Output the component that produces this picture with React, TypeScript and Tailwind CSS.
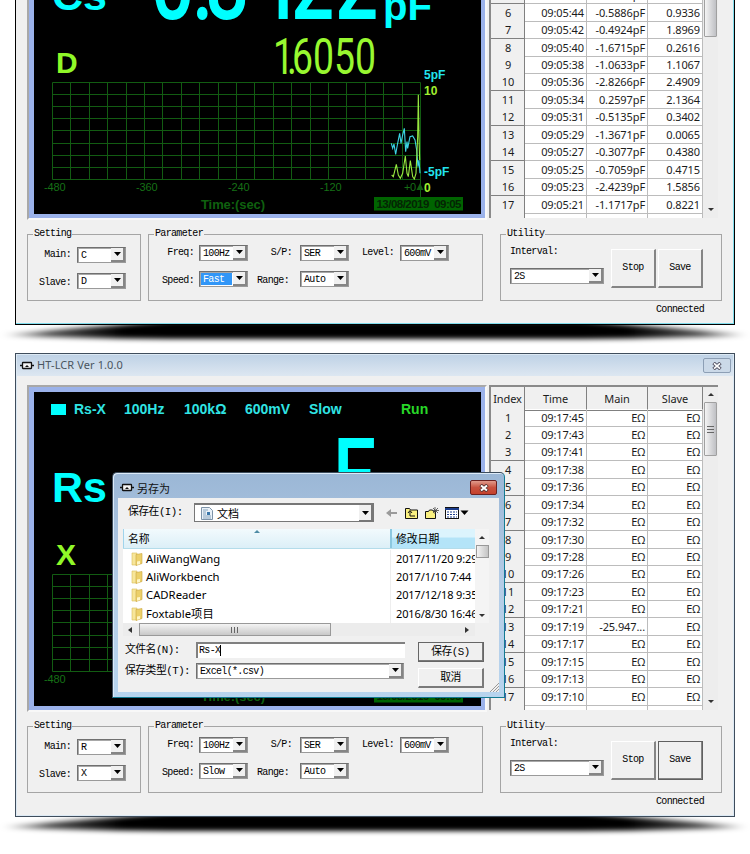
import type { ReactNode } from 'react';

type Row = [string, string, string];

interface Digits {
  text: string;
  xs: number[];
}

interface Meter {
  label: string;
  subLabel: string;
  status: string[];
  main: Digits;
  unit: string;
  sub: Digits | null;
  hasTrace: boolean;
}

interface Params {
  main: string;
  slave: string;
  speed: string;
}

const capacitanceRows: Row[] = [
  ['09:05:55', '-0.3122pF', '1.6050'],
  ['09:05:53', '-0.9214pF', '0.7731'],
  ['09:05:51', '-1.2049pF', '1.0482'],
  ['09:05:49', '-0.6673pF', '0.5127'],
  ['09:05:46', '-0.8120pF', '0.8210'],
  ['09:05:44', '-0.5886pF', '0.9336'],
  ['09:05:42', '-0.4924pF', '1.8969'],
  ['09:05:40', '-1.6715pF', '0.2616'],
  ['09:05:38', '-1.0633pF', '1.1067'],
  ['09:05:36', '-2.8266pF', '2.4909'],
  ['09:05:34', '0.2597pF', '2.1364'],
  ['09:05:31', '-0.5135pF', '0.3402'],
  ['09:05:29', '-1.3671pF', '0.0065'],
  ['09:05:27', '-0.3077pF', '0.4380'],
  ['09:05:25', '-0.7059pF', '0.4715'],
  ['09:05:23', '-2.4239pF', '1.5856'],
  ['09:05:21', '-1.1717pF', '0.8221'],
];

const resistanceRows: Row[] = [
  '45', '43', '41', '38', '36', '34', '32', '30', '28', '26', '23', '21', '19', '17', '15', '13', '10',
].map((s) => [`09:17:${s}`, s === '19' ? '-25.947...' : 'EΩ', 'EΩ']);

const capacitance: Meter = {
  label: 'Cs',
  subLabel: 'D',
  status: ['Cs-D', '100Hz', '100kΩ', '600mV', 'Fast'],
  main: { text: '0.3122', xs: [-4, 37, 51, 104, 136, 180] },
  unit: 'pF',
  sub: { text: '1.6050', xs: [-3, 11, 16, 37, 58, 79] },
  hasTrace: true,
};

const resistance: Meter = {
  label: 'Rs',
  subLabel: 'X',
  status: ['Rs-X', '100Hz', '100kΩ', '600mV', 'Slow'],
  main: { text: 'E', xs: [178] },
  unit: '',
  sub: null,
  hasTrace: false,
};

const folders = [
  ['AliWangWang', '2017/11/20 9:29'],
  ['AliWorkbench', '2017/1/10 7:44'],
  ['CADReader', '2017/12/18 9:35'],
  ['Foxtable项目', '2016/8/30 16:46'],
];

const mono = "font-['Liberation_Mono','Noto_Sans_CJK_SC',monospace] text-[10px] leading-[12px] tracking-[-0.67px]";
const sans = "font-['Noto_Sans','Noto_Sans_CJK_SC',sans-serif]";

function AppIcon() {
  return (
    <svg width="14" height="10" viewBox="0 0 14 10" fill="none" stroke="#111">
      <rect x="2.5" y="1.5" width="9" height="6" rx=".5" fill="#f5f5f5" strokeWidth="1.3" />
      <path d="M0 4.5h2M12 4.5h2" strokeWidth="1.4" />
      <path d="M5 6l2-2 2 2z" fill="#111" stroke="none" />
    </svg>
  );
}

function Caret() {
  return (
    <svg width="7" height="4" viewBox="0 0 7 4" className="shrink-0">
      <path d="M0 0h7L3.5 4z" fill="#000" />
    </svg>
  );
}

function Select({ value, className = '', active = false }: { value: string; className?: string; active?: boolean }) {
  return (
    <div
      className={`flex h-4 shrink-0 border border-t-[#707070] border-l-[#707070] border-r-[#9a9a9a] border-b-[#9a9a9a] bg-white shadow-[inset_1px_1px_0_#a8a8a8] ${mono} ${className}`}
    >
      <div className={`m-px min-w-0 flex-1 overflow-hidden pt-px pl-[2px] whitespace-nowrap ${active ? 'bg-[#3196f7] text-white' : 'text-black'}`}>
        {value}
      </div>
      <div className="flex w-[14px] shrink-0 items-center justify-center border-r-2 border-b-2 border-[#858585] bg-[#f0f0f0]">
        <Caret />
      </div>
    </div>
  );
}

function Group({ title, className, children }: { title: string; className: string; children: ReactNode }) {
  return (
    <fieldset className={`h-[73px] shrink-0 border border-[#a5a5a5] ${className}`}>
      <legend className="ml-[5px] px-[1px]">{title}</legend>
      {children}
    </fieldset>
  );
}

function Readout({ digits, width, height, color, bold = false, className }: {
  digits: Digits | null;
  width: number;
  height: number;
  color: string;
  bold?: boolean;
  className: string;
}) {
  // digits are squeezed sideways, so the offsets are stretched back by the same factor
  const squeeze = bold ? 0.745 : 0.76;
  return (
    <svg width={width} height={height} className={`shrink-0 overflow-visible font-[Roboto,sans-serif] ${className}`}>
      {digits && (
        <text
          transform={`scale(${squeeze} 1)`}
          x={digits.xs.map((x) => x / squeeze).join(' ')}
          y={height}
          fontSize={height / 0.711}
          fontWeight={bold ? 500 : 400}
          fill={color}
        >
          {digits.text}
        </text>
      )}
    </svg>
  );
}

function Chart({ hasTrace }: { hasTrace: boolean }) {
  const left = 18.5;
  const right = 386.5;
  const top = 2.5;
  const bottom = 99.5;
  const cols = Array.from({ length: 21 }, (_, i) => Math.floor(left + i * 18.4) + 0.5);
  const rows = Array.from({ length: 9 }, (_, i) => Math.floor(top + i * 12.1) + 0.5);

  return (
    <svg width="447" height="134" className="block overflow-visible font-['Liberation_Sans',sans-serif]">
      <g stroke="#125c12" strokeWidth="1">
        {cols.map((x) => <path key={x} d={`M${x} ${top}V${bottom}`} />)}
        {rows.map((y) => <path key={y} d={`M${left} ${y}H${right}`} />)}
        <path d="M386.5 99V117" />
      </g>
      <path d="M382.5 110l3.500-7 3.500 7z" fill="#125c12" />
      <g fill="#167016" fontSize="11" fontWeight="400">
        <text x="10" y="111" textLength="21.5">-480</text>
        <text x="102" y="111" textLength="21.5">-360</text>
        <text x="194" y="111" textLength="21.5">-240</text>
        <text x="286" y="111" textLength="21.5">-120</text>
        <text x="370" y="111" textLength="12">+0</text>
        <text x="167" y="129" fontSize="13" fontWeight="700" fill="#0f600f" textLength="64">Time:(sec)</text>
      </g>
      <rect x="340" y="117" width="89" height="13.5" fill="#006400" />
      <text x="342.5" y="128" fontSize="11.5" fontWeight="700" fill="#042404" textLength="85" xmlSpace="preserve">
        {'13/08/2019  09:05'}
      </text>
      {hasTrace && (
        <>
          <g transform="translate(326 -10) scale(.3333)" fill="none" strokeWidth="3.3">
            <path stroke="#3cd4e4" d="M94 220l4 15 4-13 5 31 5-28 4-20 3-15 4 30 5-25 5-20 4 70 4-30 2 20 7-35 8-2 7 12 5 30 4 50 3-20 3 40" />
            <path stroke="#98e840" d="M95 315l5 5 9-37 6 32 6 10 7-15 8-52 5 52 4 10 6-48 7 48 5 7 5-17 5-110 2-126 2 126 2 70" />
          </g>
          <g fontSize="12" fontWeight="700">
            <text x="390" y="-1" fill="#22e4ee">5pF</text>
            <text x="390" y="14.5" fill="#a0f030">10</text>
            <text x="390" y="95.5" fill="#22e4ee">-5pF</text>
            <text x="390" y="111.5" fill="#a0f030">0</text>
          </g>
        </>
      )}
    </svg>
  );
}

function Screen({ meter }: { meter: Meter }) {
  const widths = ['w-[50px]', 'w-[60px]', 'w-[61px]', 'w-[64px]', 'w-[92px]'];
  return (
    <div className="h-[327px] w-[460px] shrink-0 border-2 border-t-[#a8a8a8] border-l-[#a8a8a8] border-r-[#f8f8f8] border-b-[#f8f8f8]">
      <div className="h-full border-t-[5px] border-r-4 border-b-4 border-l-[5px] border-[#9bb2ea]">
        <div className="h-full overflow-hidden bg-black font-['Liberation_Sans',sans-serif] font-bold">
          <div className="flex h-[34px] items-center pl-[17px] text-sm text-[#30e4e4]">
            <span className="mt-px mr-2 h-[11px] w-[15px] bg-[#00ffff]" />
            {meter.status.map((s, i) => (
              <span key={s} className={widths[i]}>{s}</span>
            ))}
            <span className="text-[#28d828]">Run</span>
          </div>
          <div className="flex h-[94px] items-end pl-[18px] text-[#00ffff]">
            <span className="mb-[11px] w-[103px] shrink-0 text-[43px] leading-none">{meter.label}</span>
            <Readout digits={meter.main} width={228} height={73} color="#00ffff" bold className="mb-[9px]" />
            <span className="mb-[2px] text-[40px] leading-none">{meter.unit}</span>
          </div>
          <div className="flex h-[52px] items-end pl-[22px] text-[#90f828]">
            <span className="mb-[2px] w-[220px] shrink-0 text-[30px] leading-none">{meter.subLabel}</span>
            <Readout digits={meter.sub} width={100} height={35} color="#98f830" className="mb-[6px]" />
          </div>
          <Chart hasTrace={meter.hasTrace} />
        </div>
      </div>
    </div>
  );
}

function DataTable({ rows, thumb }: { rows: Row[]; thumb: string }) {
  const head = 'border-r border-b border-[#808080] text-center';
  return (
    <div className={`flex h-[325px] w-[229px] shrink-0 overflow-hidden border-t-2 border-l-2 border-[#8a8a8a] text-[11px] tracking-[-0.1px] text-[#1c1c1c] ${sans}`}>
      <div className="w-[212px] shrink-0 bg-white">
        <div className="grid h-[21.5px] grid-cols-[34px_62px_61px_55px] bg-[#f0f0f0] leading-[23px]">
          <div className={head}>Index</div>
          <div className={head}>Time</div>
          <div className={head}>Main</div>
          <div className={head}>Slave</div>
        </div>
        {[...rows, ['', '', '']].map((r, i) => (
          <div key={i} className="grid h-[17.44px] grid-cols-[34px_62px_61px_55px] leading-[17px]">
            <div className="border-r border-b border-[#808080] bg-[#f0f0f0] pl-px text-center">{i < rows.length ? i + 1 : ''}</div>
            {r.map((cell, c) => (
              <div key={c} className="border-r border-b border-[#bcbcbc] pr-[2px] text-right">{cell}</div>
            ))}
          </div>
        ))}
      </div>
      <div className="flex flex-1 flex-col items-center bg-[#ededed]">
        <div className="flex h-[15px] items-center">
          <svg width="6" height="3"><path d="M0 3h6L3 0z" fill="#333" /></svg>
        </div>
        <div className={`flex w-[13px] items-center justify-center rounded-[1px] border border-[#a0a0a0] bg-linear-to-r from-[#f4f4f4] to-[#bfc0c4] ${thumb}`}>
          <svg width="7" height="7"><path d="M0 .5h7M0 3.500h7M0 6.500h7" stroke="#666" /></svg>
        </div>
        <div className="mt-auto flex h-[18px] items-center">
          <svg width="6" height="3"><path d="M0 0h6L3 3z" fill="#333" /></svg>
        </div>
      </div>
    </div>
  );
}

function Controls({ params, saveFocused }: { params: Params; saveFocused: boolean }) {
  const button = 'flex h-[39px] w-[45px] items-center justify-center border-t border-l border-t-white border-l-white border-r-2 border-b-2 border-r-[#858585] border-b-[#858585]';
  return (
    <div className={`mt-[8px] flex items-start text-black ${mono}`}>
      <Group title="Setting" className="w-[114px]">
        <div className="flex flex-col gap-[10px] pt-[7px]">
          <div className="flex items-center">
            <span className="w-[43px] text-right">Main:</span>
            <Select value={params.main} className="ml-[6px] w-[49px]" />
          </div>
          <div className="flex items-center">
            <span className="w-[43px] pt-[3px] text-right">Slave:</span>
            <Select value={params.slave} className="ml-[6px] w-[49px]" />
          </div>
        </div>
      </Group>
      <Group title="Parameter" className="ml-[7px] w-[335px]">
        <div className="flex items-center pt-[5px]">
          <span className="w-[45px] text-right">Freq:</span>
          <Select value="100Hz" className="ml-[5px] w-[49px]" />
          <span className="w-[44px] text-right">S/P:</span>
          <Select value="SER" className="ml-[8px] w-[49px]" />
          <span className="w-[45px] text-right">Level:</span>
          <Select value="600mV" className="ml-[6px] w-[49px]" />
        </div>
        <div className="flex items-center pt-[10px]">
          <span className="w-[45px] pt-[3px] text-right">Speed:</span>
          <Select value={params.speed} active={params.speed === 'Fast'} className="ml-[5px] w-[49px]" />
          <span className="w-[41px] pt-[3px] text-right">Range:</span>
          <Select value="Auto" className="ml-[11px] w-[49px]" />
        </div>
      </Group>
      <div className="ml-[17px]">
        <Group title="Utility" className="w-[222px]">
          <div className="flex pt-[6px] pl-[9px]">
            <div className="w-[95px]">
              <div>Interval:</div>
              <Select value="2S" className="mt-[10px] w-[94px]" />
            </div>
            <div className={`mt-[3px] ml-[6px] ${button}`}>Stop</div>
            <div className={`mt-[3px] ml-[2px] ${button} ${saveFocused ? 'outline outline-[#606060] -outline-offset-1' : ''}`}>Save</div>
          </div>
        </Group>
        <div className="mt-[3px] pr-[18px] text-right">Connected</div>
      </div>
    </div>
  );
}

function Shadow() {
  return (
    <svg width="750" height="36" viewBox="0 0 750 36" className="pointer-events-none absolute bottom-0 left-0">
      <defs>
        <filter id="soft" x="-5%" y="-80%" width="110%" height="260%">
          <feGaussianBlur stdDeviation="5 2.4" />
        </filter>
        <linearGradient id="ends" x1="0" x2="1">
          <stop offset="0" stopOpacity="0.25" />
          <stop offset="0.06" stopOpacity="0.7" />
          <stop offset="0.16" stopOpacity="1" />
          <stop offset="0.84" stopOpacity="1" />
          <stop offset="0.94" stopOpacity="0.7" />
          <stop offset="1" stopOpacity="0.25" />
        </linearGradient>
      </defs>
      <path d="M4 18Q60 12 170 4H580Q690 12 746 18Q690 21 580 22H170Q60 21 4 18z" fill="url(#ends)" filter="url(#soft)" />
    </svg>
  );
}

function MeterWindow({ meter, rows, params, thumb, frame, saveFocused = false }: {
  meter: Meter;
  rows: Row[];
  params: Params;
  thumb: string;
  frame: string;
  saveFocused?: boolean;
}) {
  return (
    <div className={`relative mx-auto h-[464px] w-[720px] overflow-hidden border bg-[#f0f0f0] p-px ${frame}`}>
      <div className="flex h-[21px] items-center bg-linear-to-b from-[#bfd2e6] to-[#dde7f1] pr-[2px] pl-[3px]">
        <AppIcon />
        <span className={`ml-[3px] text-[11px] tracking-[0.1px] text-[#4a5560] ${sans}`}>HT-LCR Ver 1.0.0</span>
        <div className="ml-auto flex h-[15px] w-[28px] items-center justify-center rounded-[2px] border border-[#8d9fb5] bg-[#cbd9e8]">
          <svg width="10" height="8" viewBox="0 0 10 8">
            <path d="M1.500 1l7 6M8.500 1l-7 6" stroke="#556" strokeWidth="3.6" />
            <path d="M2 1.400l6 5.200M8 1.400L2 6.600" stroke="#fff" strokeWidth="1.7" />
          </svg>
        </div>
      </div>
      <div className="pt-[9px] pl-[10px]">
        <div className="flex gap-[2px]">
          <Screen meter={meter} />
          <DataTable rows={rows} thumb={thumb} />
        </div>
        <Controls params={params} saveFocused={saveFocused} />
      </div>
    </div>
  );
}

function FolderIcon() {
  return (
    <svg width="12" height="14" viewBox="0 0 12 14">
      <path d="M1 1h5v12H1z" fill="#f7e69a" stroke="#d9bd57" strokeWidth=".6" />
      <path d="M5 2.500l6-1v10L5 13.500z" fill="#ecd06a" stroke="#c9a63f" strokeWidth=".6" />
      <path d="M6 9.500l3-.6v3L6 12.700z" fill="#fff6c8" />
    </svg>
  );
}

function SaveDialog() {
  const button = 'flex h-[20px] w-[66px] items-center justify-center border-t border-l border-t-white border-l-white border-r-2 border-b-2 border-r-[#7a7a7a] border-b-[#7a7a7a] bg-[#f0f0f0]';
  const label = "shrink-0 font-['Liberation_Mono','Noto_Sans_CJK_SC',monospace] text-[10.8px] leading-[14px] tracking-[-0.5px]";
  return (
    <div className="absolute top-[119px] left-[112px] flex h-[226px] w-[393px] flex-col rounded-t-[5px] border border-[#3c4c5c] border-r-[#127a92] border-b-[#127a92] bg-linear-to-b from-[#9bb7d6] via-[#b4cce6] to-[#b7d4ee] px-[5px] pb-[5px] text-black shadow-[inset_1px_1px_0_#dceaf8]">
      <div className="flex h-[25px] shrink-0 items-center pt-[5px] pr-[2px] pl-[2px]">
        <AppIcon />
        <span className={`ml-[3px] text-[11px] leading-none text-[#111] ${sans}`}>另存为</span>
        <div className="mb-[1px] ml-auto flex h-[15px] w-[27px] items-center justify-center rounded-[2px] border border-[#6b2020] bg-linear-to-b from-[#e09a8c] via-[#c8513f] to-[#c4402c]">
          <svg width="10" height="8" viewBox="0 0 10 8">
            <path d="M1.500 1l7 6M8.500 1l-7 6" stroke="#533" strokeWidth="3.6" />
            <path d="M2 1.400l6 5.200M8 1.400L2 6.600" stroke="#fff" strokeWidth="2" />
          </svg>
        </div>
      </div>
      <div className="relative min-h-0 flex-1 bg-[#f0f0f0] pl-[5px]">
        <div className="flex h-[31px] items-center pb-[2px] pl-[5px]">
          <span className={`w-[66px] pb-[2px] ${label}`}>保存在(I):</span>
          <div className="flex h-[19px] w-[180px] items-center border border-t-2 border-[#777] bg-white">
            <svg width="12" height="13" viewBox="0 0 12 13" className="ml-[6px]">
              <path d="M.5 .5h8l3 3v9H.5z" fill="#e9f1f8" stroke="#7d93a8" />
              <path d="M2 3h5M2 5h3M2 7h3M2 9h8M2 11h8" stroke="#88a4bd" />
              <rect x="6" y="5" width="3" height="3" fill="#3a76aa" />
            </svg>
            <span className={`ml-[4px] text-[11px] leading-none ${sans}`}>文档</span>
            <div className="ml-auto flex h-full w-[14px] items-center justify-center border-r-2 border-b border-[#777] bg-[#f0f0f0]">
              <Caret />
            </div>
          </div>
          <svg width="84" height="14" viewBox="0 0 84 14" className="ml-[11px]">
            <path d="M1 7l5-4v3h6v2H6v3z" fill="#9a9a9a" />
            <path d="M20.500 2.500h4l1 1.500h7v8.500h-12z" fill="#faf080" stroke="#111" />
            <path d="M23 7l2-2.500 2 2.500M25 5v5h5" fill="none" stroke="#111" />
            <path d="M40.500 5.500h3l1-1.500h3l1 1.500h2v7h-10z" fill="#faf080" stroke="#111" />
            <path d="M50 1v7M47 4.500h7M48 2l5 5M53 2l-5 5" stroke="#444" strokeWidth=".8" />
            <rect x="60.500" y="1.500" width="13" height="11" fill="#fff" stroke="#111" />
            <path d="M60 3h14" stroke="#1b3c8c" strokeWidth="2" />
            <path d="M62 6h10M62 8.500h10M62 11h10" stroke="#1b3c8c" strokeDasharray="2 1" />
            <path d="M75.500 4.500h8l-4 4.500z" fill="#000" />
          </svg>
        </div>
        <div className="flex">
          <div className="h-[94px] w-[352px] overflow-hidden bg-white">
            <div className={`flex h-5 border-b border-[#b4dcea] text-[10.8px] leading-[20px] ${sans}`}>
              <div className="relative w-[267px] border-l border-[#a0d4ec] bg-linear-to-b from-[#f2fafd] to-[#dceff7] pl-[4px]">
                名称
                <svg width="6" height="3" className="absolute top-[1px] left-[130px]"><path d="M0 3h6L3 0z" fill="#4f8ba5" /></svg>
              </div>
              <div className="flex-1 border-l-2 border-[#8cc8e0] bg-linear-to-b from-[#dcf4fd] from-40% to-[#b4e4f8] to-50% pl-[4px]">修改日期</div>
            </div>
            <div className={`flex flex-col pt-[1px] text-[11.3px] leading-[18.2px] ${sans}`}>
              {folders.map(([name, date]) => (
                <div key={name} className="flex h-[18.2px] items-center whitespace-nowrap">
                  <div className="flex w-[268px] shrink-0 items-center gap-[3px] border-r border-[#eee] pl-[8px]">
                    <FolderIcon />
                    {name}
                  </div>
                  <span className="pl-[5px] text-[11px] tracking-[-0.12px]">{date}</span>
                </div>
              ))}
            </div>
          </div>
          <div className="flex h-[94px] w-[14px] flex-col items-center bg-[#f4f4f4]">
            <svg width="6" height="3" className="mt-[7px]"><path d="M0 3h6L3 0z" fill="#333" /></svg>
            <div className="mt-[6px] h-[13px] w-[13px] border border-[#999] bg-linear-to-r from-[#f4f4f4] to-[#c4c4c4]" />
            <svg width="6" height="3" className="mt-auto mb-[6px]"><path d="M0 0h6L3 3z" fill="#333" /></svg>
          </div>
        </div>
        <div className="flex h-[13px] w-[352px] items-center bg-[#ececec]">
          <svg width="4" height="6" className="ml-[5px]"><path d="M4 0v6L0 3z" fill="#333" /></svg>
          <div className="ml-[7px] flex h-[13px] w-[192px] items-center justify-center border border-[#999] bg-linear-to-b from-[#f4f4f4] to-[#c8c8c8]">
            <svg width="8" height="6"><path d="M.5 0v6M3.500 0v6M6.500 0v6" stroke="#666" /></svg>
          </div>
          <svg width="4" height="6" className="mr-[6px] ml-auto"><path d="M0 0v6l4-3z" fill="#333" /></svg>
        </div>
        <div className="flex pl-[2px]">
          <div className="flex flex-col gap-[5px] pt-[6px]">
            <div className="flex h-4 items-center">
              <span className={`w-[71px] ${label}`}>文件名(N):</span>
              <div className={`h-4 w-[209px] border-t-2 border-l-2 border-[#808080] bg-white pt-px pl-[1px] ${mono}`}>
                <span className="border-r border-black">Rs-X</span>
              </div>
            </div>
            <div className="flex h-4 items-center">
              <span className={`w-[71px] ${label}`}>保存类型(T):</span>
              <Select value="Excel(*.csv)" className="w-[208px]" />
            </div>
          </div>
          <div className={`ml-[13px] flex flex-col gap-[6px] pt-[6px] ${label}`}>
            <div className={`${button} outline outline-[#666] -outline-offset-1`}>保存(S)</div>
            <div className={button}>取消</div>
          </div>
        </div>
        <svg width="10" height="10" className="absolute right-0 bottom-0">
          <path d="M1 10l9-9M4 10l6-6M7 10l3-3" stroke="#999" />
        </svg>
      </div>
    </div>
  );
}

export default function App() {
  return (
    <div className="flex h-[854px] w-[750px] flex-col overflow-hidden bg-white">
      <div className="relative flex h-[353px] shrink-0 flex-col justify-end overflow-hidden pb-[28px]">
        <Shadow />
        <MeterWindow
          meter={capacitance}
          rows={capacitanceRows}
          params={{ main: 'C', slave: 'D', speed: 'Fast' }}
          thumb="h-[127px]"
          frame="shrink-0 border-black shadow-[inset_-1px_-1px_0_#7fdcec]"
        />
      </div>
      <div className="relative h-[492px] shrink-0">
        <Shadow />
        <MeterWindow
          meter={resistance}
          rows={resistanceRows}
          params={{ main: 'R', slave: 'X', speed: 'Slow' }}
          thumb="h-[54px]"
          frame="border-[#3f4d5c] shadow-[inset_0_0_0_1px_#dce9f4]"
          saveFocused
        />
        <SaveDialog />
      </div>
    </div>
  );
}
